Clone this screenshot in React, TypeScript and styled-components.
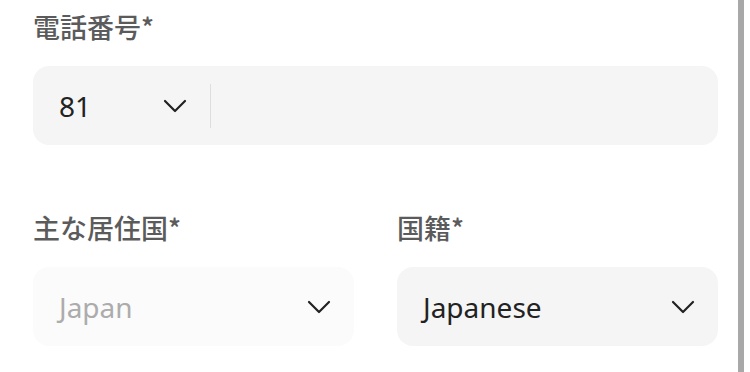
import React from "react";
import styled, { createGlobalStyle } from "styled-components";

const Global = createGlobalStyle`
  html, body { margin: 0; padding: 0; background: #fff; }
  body { font-family: "Noto Sans", "Noto Sans CJK JP", sans-serif; }
  * { box-sizing: border-box; }
`;

const Page = styled.div`
  display: flex;
  width: 750px;
  height: 372px;
  overflow: hidden;
`;

const Content = styled.div`
  width: 738px;
  padding: 9px 20px 0 33px;
  display: flex;
  flex-direction: column;
`;

const Thumb = styled.div`
  width: 6px;
  height: 372px;
  background: #a8a8a8;
`;

const Field = styled.div`
  display: flex;
  flex-direction: column;
  min-width: 0;
`;

const Column = styled(Field)`
  flex: 1;
`;

const Label = styled.div`
  font-family: "Noto Sans CJK JP", "Noto Sans", sans-serif;
  font-size: 27px;
  font-weight: 500;
  color: #5b5b5b;
  line-height: 36px;
  height: 36px;
  margin-bottom: 21px;
`;

const Box = styled.div<{ $disabled?: boolean }>`
  height: 79px;
  border-radius: 16px;
  background: ${(p) => (p.$disabled ? "#fbfbfb" : "#f5f5f5")};
  display: flex;
  align-items: center;
`;

const CodeSelect = styled.div`
  width: 177px;
  display: flex;
  align-items: center;
  justify-content: space-between;
  padding: 0 23px 0 26px;
`;

const Divider = styled.div`
  width: 1px;
  height: 44px;
  background: #dedede;
`;

const Value = styled.span<{ $muted?: boolean }>`
  font-family: "Noto Sans", sans-serif;
  font-size: 28px;
  color: ${(p) => (p.$muted ? "#acacac" : "#222")};
`;

const SelectBox = styled(Box)`
  justify-content: space-between;
  padding: 0 23px 0 26px;
`;

const Row = styled.div`
  display: flex;
  gap: 43px;
  margin-top: 65px;
`;

const Chevron = () => (
  <svg width="24" height="14" viewBox="0 0 24 14" fill="none">
    <polyline
      points="2,2 12,12 22,2"
      stroke="#222"
      strokeWidth="2.2"
      strokeLinecap="round"
      strokeLinejoin="round"
    />
  </svg>
);

export default function App() {
  return (
    <Page>
      <Global />
      <Content>
        <Field>
          <Label>電話番号*</Label>
          <Box>
            <CodeSelect>
              <Value>81</Value>
              <Chevron />
            </CodeSelect>
            <Divider />
          </Box>
        </Field>
        <Row>
          <Column>
            <Label>主な居住国*</Label>
            <SelectBox $disabled>
              <Value $muted>Japan</Value>
              <Chevron />
            </SelectBox>
          </Column>
          <Column>
            <Label>国籍*</Label>
            <SelectBox>
              <Value>Japanese</Value>
              <Chevron />
            </SelectBox>
          </Column>
        </Row>
      </Content>
      <Thumb />
    </Page>
  );
}
